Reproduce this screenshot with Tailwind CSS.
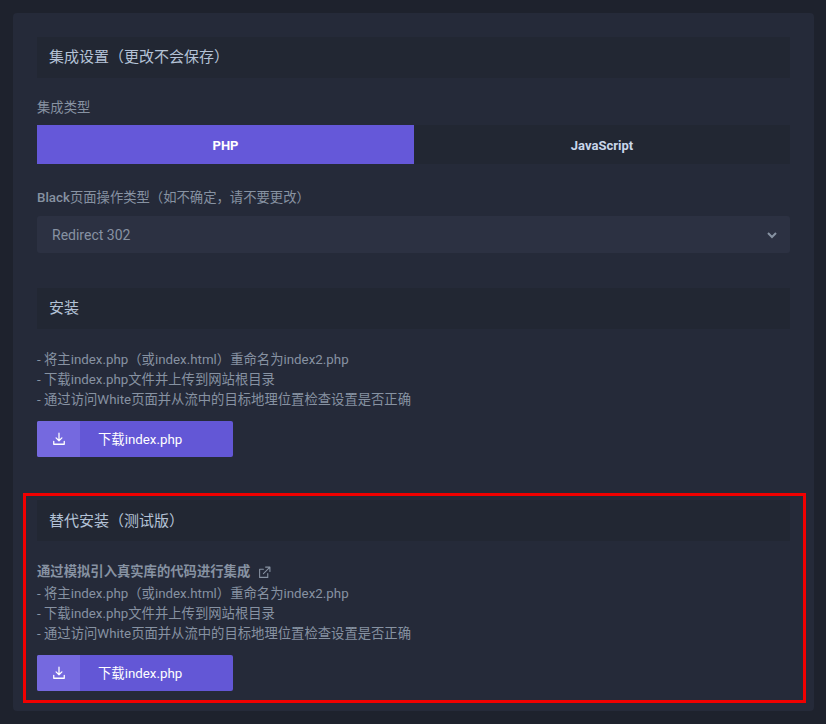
<!DOCTYPE html>
<html lang="zh">
<head>
    <meta charset="UTF-8">
    <script src="https://cdn.jsdelivr.net/npm/@tailwindcss/browser@4"></script>
    <title>集成设置</title>
</head>
<body class="bg-[#1e222d] font-['Roboto','Noto_Sans_CJK_SC',sans-serif]">
    <div class="relative w-[826px] h-[724px] overflow-hidden p-[13px]">
        <div class="w-[801px] h-[698px] bg-[#252a39] rounded p-6">
            <!-- settings -->
            <div class="h-[41px] bg-[#222733] px-3 flex items-center text-[15px] text-[#b4c2d6]">集成设置（更改不会保存）</div>
            <div class="mt-5 h-[20px] leading-5 text-[13.33px] text-[#8792a2]">集成类型</div>
            <div class="mt-[7px] flex h-[39px] text-[13px] font-bold">
                <div class="w-[377px] pt-[2px] bg-[#6558d9] text-white flex items-center justify-center">PHP</div>
                <div class="flex-1 pt-[2px] bg-[#222733] text-[#c9d6ea] flex items-center justify-center">JavaScript</div>
            </div>
            <div class="mt-6 h-[20px] leading-5 text-[13.33px] text-[#8792a2]"><span class="font-medium">Black</span>页面操作类型（如不确定，请不要更改）</div>
            <div class="mt-2 h-[37px] bg-[#2c3142] rounded-[3px] pl-[15px] pr-3 flex items-center justify-between text-sm text-[#8792a2]">
                <span>Redirect 302</span>
                <svg class="w-[12px] h-[12px]" viewBox="0 0 12 12" fill="none" stroke="#8792a2" stroke-width="2"><path d="M2 4l4 4 4-4"/></svg>
            </div>

            <!-- install -->
            <div class="mt-[35px] h-[41px] bg-[#222733] px-3 flex items-center text-[15px] text-[#b4c2d6]">安装</div>
            <div class="mt-[21px] text-[13.33px] leading-5 text-[#8792a2]">
                <p>- 将主index.php（或index.html）重命名为index2.php</p>
                <p>- 下载index.php文件并上传到网站根目录</p>
                <p>- 通过访问White页面并从流中的目标地理位置检查设置是否正确</p>
            </div>
            <div class="mt-[11px] w-[196px] h-9 rounded-[2px] bg-[#6357d6] flex items-center text-[13.33px] text-white overflow-hidden">
                <span class="w-[43px] h-full bg-[#7569df] flex items-center justify-center">
                    <svg class="w-[14px] h-[14px]" viewBox="0 0 24 24" fill="none" stroke="#fff" stroke-width="2.2" stroke-linecap="round" stroke-linejoin="round"><path d="M3 16v5h18v-5M12 2v13M7 10l5 5 5-5"/></svg>
                </span>
                <span class="ml-[18px] pt-px">下载index.php</span>
            </div>

            <!-- alternative install -->
            <div class="mt-[43px] h-[41px] bg-[#222733] px-3 pt-px flex items-center text-[15px] text-[#b4c2d6]">替代安装（测试版）</div>
            <div class="mt-[21px] h-[20px] flex items-center text-[13.33px] font-bold text-[#8792a2]">
                <span>通过模拟引入真实库的代码进行集成</span>
                <svg class="ml-2 w-[13px] h-[13px]" viewBox="0 0 24 24" fill="none" stroke="#8792a2" stroke-width="2" stroke-linecap="round" stroke-linejoin="round"><path d="M18 14v7H3V6h7M14 2h8v8M22 2L10 14"/></svg>
            </div>
            <div class="mt-[2px] text-[13.33px] leading-5 text-[#8792a2]">
                <p>- 将主index.php（或index.html）重命名为index2.php</p>
                <p>- 下载index.php文件并上传到网站根目录</p>
                <p>- 通过访问White页面并从流中的目标地理位置检查设置是否正确</p>
            </div>
            <div class="mt-[11px] w-[196px] h-9 rounded-[2px] bg-[#6357d6] flex items-center text-[13.33px] text-white overflow-hidden">
                <span class="w-[43px] h-full bg-[#7569df] flex items-center justify-center">
                    <svg class="w-[14px] h-[14px]" viewBox="0 0 24 24" fill="none" stroke="#fff" stroke-width="2.2" stroke-linecap="round" stroke-linejoin="round"><path d="M3 16v5h18v-5M12 2v13M7 10l5 5 5-5"/></svg>
                </span>
                <span class="ml-[18px] pt-px">下载index.php</span>
            </div>
        </div>
        <!-- highlight frame drawn over the screenshot -->
        <div class="absolute left-[23px] top-[493px] w-[783px] h-[210px] border-[3px] border-[#f00000]"></div>
    </div>
</body>
</html>
